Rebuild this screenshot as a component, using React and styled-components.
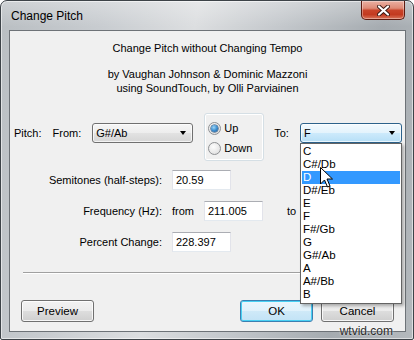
import React from 'react';
import styled, { createGlobalStyle } from 'styled-components';

const GlobalStyle = createGlobalStyle`
  html, body { margin: 0; padding: 0; background: #fff; }
  body {
    font-family: "Liberation Sans", Arial, sans-serif;
    font-size: 11px;
    color: #000;
  }
`

const Window = styled.div`
  position: relative;
  width: 414px;
  height: 340px;
  box-sizing: border-box;
  display: flex;
  flex-direction: column;
  padding: 0 7px 7px 8px;
  border: 1px solid #3d4348;
  border-radius: 7px 7px 2px 2px;
  background:
    linear-gradient(180deg, rgba(255,255,255,0.3) 0, rgba(255,255,255,0) 26px),
    linear-gradient(100deg, #b9bec2 0%, #c8ccd0 22%, #dcdee0 42%, #c4c8cc 60%, #a5abb0 82%, #b4b9bd 100%);
  box-shadow: inset 0 0 0 1px rgba(255,255,255,0.55);
  overflow: hidden;
`

const TitleBar = styled.div`
  height: 29px;
  display: flex;
  align-items: flex-start;
`

const Caption = styled.div`
  font-size: 12px;
  line-height: 30px;
  padding-left: 2px;
  color: #000;
`

const CloseButton = styled.div`
  margin-left: auto;
  margin-right: 1px;
  width: 44px;
  height: 19px;
  box-sizing: border-box;
  border: 1px solid #5e1b10;
  border-top: none;
  border-radius: 0 0 5px 5px;
  background: linear-gradient(180deg, #eab0a2 0%, #de8a76 40%, #c9442a 52%, #c33a20 75%, #d9745a 100%);
  box-shadow: inset 0 0 0 1px rgba(255,255,255,0.35);
  display: flex;
  align-items: center;
  justify-content: center;
`

const Client = styled.div`
  flex: 1;
  display: flex;
  flex-direction: column;
  border: 1px solid #6d7277;
  background: #f0f0f0;
`

const Header = styled.div`
  text-align: center;
  padding-top: 10px;
  line-height: 14px;
`

const HeaderLine = styled.div`
  margin-bottom: ${p => p.$gap || 0}px;
`

const PitchRow = styled.div`
  margin-top: 18px;
  display: flex;
  align-items: flex-start;
  padding-left: 4px;
`

const Label = styled.span`
  margin-top: 10px;
  margin-left: ${p => p.$ml || 0}px;
  line-height: 20px;
  white-space: nowrap;
`

const SelectWrap = styled.div`
  position: relative;
  margin-top: 10px;
  margin-left: ${p => p.$ml || 0}px;
`

const Select = styled.div`
  width: ${p => p.$w}px;
  height: 20px;
  box-sizing: border-box;
  border: 1px solid ${p => (p.$open ? '#2c628b' : '#707070')};
  border-radius: 3px;
  background: ${p => (p.$open
    ? 'linear-gradient(180deg, #f3fafe 0%, #e3f3fc 50%, #cdeafb 51%, #b6dff7 100%)'
    : 'linear-gradient(180deg, #f6f6f6 0%, #ededed 50%, #e2e2e2 51%, #d6d6d6 100%)')};
  box-shadow: inset 0 0 0 1px rgba(255,255,255,0.7);
  display: flex;
  align-items: center;
  padding: 0 6px 0 3px;
  line-height: 18px;
`

const Arrow = styled.span`
  margin-left: auto;
  width: 0;
  height: 0;
  border-left: 3.5px solid transparent;
  border-right: 3.5px solid transparent;
  border-top: 4px solid #000;
`

const GroupBox = styled.div`
  margin-left: 11px;
  width: 60px;
  height: 48px;
  box-sizing: border-box;
  border: 1px solid #d5dfe5;
  border-radius: 3px;
  box-shadow: inset 0 0 0 1px #fff;
  padding: 4px 0 0 3px;
`

const RadioRow = styled.div`
  height: 20px;
  display: flex;
  align-items: center;
  gap: 3px;
  font-size: 11px;
`

const Radio = styled.span`
  width: 13px;
  height: 13px;
  box-sizing: border-box;
  border-radius: 50%;
  border: 1px solid #8e9093;
  background: radial-gradient(circle at 40% 35%, #fdfdfd 0%, #e8e8e8 60%, #d4d4d4 100%);
  display: flex;
  align-items: center;
  justify-content: center;
  &::after {
    content: "";
    display: ${p => (p.$checked ? 'block' : 'none')};
    width: 7px;
    height: 7px;
    border-radius: 50%;
    background: radial-gradient(circle at 40% 35%, #9fd6f7 0%, #3e8fd0 50%, #1b4f86 100%);
    box-shadow: 0 0 0 0.5px #1a3f66;
  }
`

const DropList = styled.div`
  position: absolute;
  left: 0;
  top: 20px;
  width: 102px;
  box-sizing: border-box;
  border: 1px solid #646464;
  background: #fff;
  padding: 1px 1px 2px;
  box-shadow: 2px 2px 3px rgba(0,0,0,0.3);
  z-index: 5;
`

const Option = styled.div`
  height: 13px;
  line-height: 13px;
  padding-left: 1px;
  font-size: 11.5px;
  background: ${p => (p.$active ? '#3399ff' : 'transparent')};
  color: ${p => (p.$active ? '#fff' : '#000')};
`

const Fields = styled.div`
  margin-top: 9px;
  display: grid;
  grid-template-columns: 152px auto;
  column-gap: 10px;
  row-gap: 11px;
  align-items: center;
`

const FieldLabel = styled.div`
  text-align: right;
  white-space: nowrap;
`

const FieldBody = styled.div`
  display: flex;
  align-items: center;
`

const Input = styled.div`
  width: 59px;
  height: 20px;
  box-sizing: border-box;
  margin-left: ${p => p.$ml || 0}px;
  border: 1px solid #e2e3ea;
  border-top-color: #abadb3;
  border-bottom-color: #e3e9ef;
  background: #fff;
  padding-left: 3px;
  line-height: 18px;
`

const Small = styled.span`
  margin-left: ${p => p.$ml || 0}px;
`

const Separator = styled.div`
  margin: 20px 13px 0 13px;
  border-top: 1px solid #a0a0a0;
  border-bottom: 1px solid #fff;
`

const ButtonRow = styled.div`
  margin-top: 26px;
  display: flex;
  padding: 0 11px;
  gap: 8px;
`

const Button = styled.div`
  width: 73px;
  height: 22px;
  box-sizing: border-box;
  border: 1px solid ${p => (p.$default ? '#3c7fb1' : '#707070')};
  border-radius: 3px;
  background: ${p => (p.$default
    ? 'linear-gradient(180deg, #eaf6fd 0%, #e0f1fb 50%, #cfe9f8 51%, #c2e3f6 100%)'
    : 'linear-gradient(180deg, #f2f2f2 0%, #ebebeb 50%, #dddddd 51%, #cfcfcf 100%)')};
  box-shadow: inset 0 0 0 1px ${p => (p.$default ? '#48d0f3' : 'rgba(255,255,255,0.8)')};
  display: flex;
  align-items: center;
  justify-content: center;
  font-size: 11.5px;
  margin-left: ${p => (p.$push ? 'auto' : '0')};
`

const Cursor = styled.svg`
  position: absolute;
  left: 319px;
  top: 166px;
  z-index: 10;
`

const Watermark = styled.div`
  position: absolute;
  right: 20px;
  bottom: 1px;
  font-size: 12px;
  color: #2b2b2b;
  text-shadow: 0 0 2px #fff;
  z-index: 6;
`

const notes = ['C', 'C#/Db', 'D', 'D#/Eb', 'E', 'F', 'F#/Gb', 'G', 'G#/Ab', 'A', 'A#/Bb', 'B'];

export default function App() {
  return (
    <>
      <GlobalStyle />
      <Window>
        <TitleBar>
          <Caption>Change Pitch</Caption>
          <CloseButton>
            <svg width="13" height="11" viewBox="0 0 13 11">
              <path d="M2 1.5 L11 9.5 M11 1.5 L2 9.5" stroke="#3a1a14" strokeWidth="4" strokeLinecap="round" />
              <path d="M2 1.5 L11 9.5 M11 1.5 L2 9.5" stroke="#fff" strokeWidth="2.2" strokeLinecap="round" />
            </svg>
          </CloseButton>
        </TitleBar>
        <Client>
          <Header>
            <HeaderLine $gap={12}>Change Pitch without Changing Tempo</HeaderLine>
            <HeaderLine>by Vaughan Johnson &amp; Dominic Mazzoni</HeaderLine>
            <HeaderLine>using SoundTouch, by Olli Parviainen</HeaderLine>
          </Header>

          <PitchRow>
            <Label>Pitch:</Label>
            <Label $ml={11}>From:</Label>
            <SelectWrap $ml={11}>
              <Select $w={101}>G#/Ab<Arrow /></Select>
            </SelectWrap>
            <GroupBox>
              <RadioRow><Radio $checked />Up</RadioRow>
              <RadioRow><Radio />Down</RadioRow>
            </GroupBox>
            <Label $ml={10}>To:</Label>
            <SelectWrap $ml={11}>
              <Select $w={102} $open>F<Arrow /></Select>
              <DropList>
                {notes.map(n => (
                  <Option key={n} $active={n === 'D'}>{n}</Option>
                ))}
              </DropList>
            </SelectWrap>
          </PitchRow>

          <Fields>
            <FieldLabel>Semitones (half-steps):</FieldLabel>
            <FieldBody><Input>20.59</Input></FieldBody>
            <FieldLabel>Frequency (Hz):</FieldLabel>
            <FieldBody>
              <Small>from</Small>
              <Input $ml={10}>211.005</Input>
              <Small $ml={24}>to</Small>
            </FieldBody>
            <FieldLabel>Percent Change:</FieldLabel>
            <FieldBody><Input>228.397</Input></FieldBody>
          </Fields>

          <Separator />

          <ButtonRow>
            <Button>Preview</Button>
            <Button $default $push>OK</Button>
            <Button>Cancel</Button>
          </ButtonRow>
        </Client>
        <Cursor width="14" height="22" viewBox="0 0 14 22">
          <path d="M0.5 0.5 L0.5 17 L4.5 13 L7.5 20 L10 19 L7 12 L12.5 12 Z" fill="#fff" stroke="#000" strokeWidth="1" />
        </Cursor>
        <Watermark>wtvid.com</Watermark>
      </Window>
    </>
  );
}
